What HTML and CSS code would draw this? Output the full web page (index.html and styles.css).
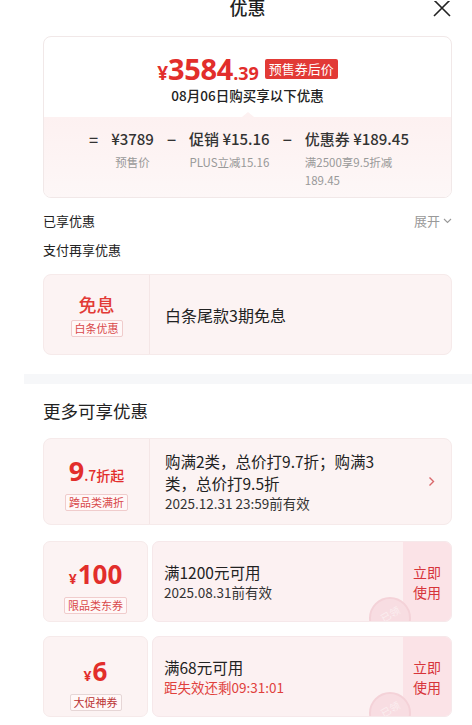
FILE: index.html
```html
<!DOCTYPE html>
<html lang="zh-CN">
<head>
    <meta charset="UTF-8">
    <meta name="viewport" content="width=device-width, initial-scale=1.0">
    <title>优惠</title>
    <link rel="stylesheet" href="styles.css">
</head>
<body>

<header class="top-bar">
    <span></span>
    <h1>优惠</h1>
    <span class="close">
        <svg width="20" height="17" viewBox="0 0 20 17"><path d="M2 -1 L18 15 M18 -1 L2 15" stroke="#222" stroke-width="1.6" fill="none"/></svg>
    </span>
</header>

<main class="sheet">

    <section class="summary">
        <div class="summary-head">
            <div class="final-price">
                <span class="yen">¥</span><span class="int">3584</span><span class="dec">.39</span>
                <span class="price-badge">预售券后价</span>
            </div>
            <p class="buy-date">08月06日购买享以下优惠</p>
        </div>
        <div class="summary-calc">
            <span class="op">=</span>
            <div class="calc-item center">
                <div class="calc-value">¥3789</div>
                <div class="calc-label">预售价</div>
            </div>
            <span class="op">−</span>
            <div class="calc-item center">
                <div class="calc-value">促销 ¥15.16</div>
                <div class="calc-label">PLUS立减15.16</div>
            </div>
            <span class="op">−</span>
            <div class="calc-item">
                <div class="calc-value">优惠券 ¥189.45</div>
                <div class="calc-label">满2500享9.5折减189.45</div>
            </div>
        </div>
    </section>

    <div class="row-title">
        <span>已享优惠</span>
        <span class="expand">展开
            <svg width="9" height="6" viewBox="0 0 9 6"><path d="M1 1 L4.5 4.5 L8 1" stroke="#999" stroke-width="1.1" fill="none"/></svg>
        </span>
    </div>
    <div class="row-title second">支付再享优惠</div>

    <div class="offer">
        <div class="offer-left">
            <div class="big-word">免息</div>
            <span class="tag">白条优惠</span>
        </div>
        <div class="offer-body">
            <div class="offer-line single">白条尾款3期免息</div>
        </div>
    </div>

    <div class="band"></div>

    <h2 class="more-title">更多可享优惠</h2>

    <div class="offer tall">
        <div class="offer-left">
            <div class="discount"><span class="d-big">9</span><span class="d-small">.7折起</span></div>
            <span class="tag">跨品类满折</span>
        </div>
        <div class="offer-body">
            <div class="offer-line">购满2类，总价打9.7折；购满3类，总价打9.5折</div>
            <div class="offer-sub">2025.12.31 23:59前有效</div>
        </div>
        <div class="offer-arrow">
            <svg width="7" height="11" viewBox="0 0 7 11"><path d="M1.5 1.5 L5.5 5.5 L1.5 9.5" stroke="#d9676a" stroke-width="1.4" fill="none"/></svg>
        </div>
    </div>

    <div class="ticket">
        <div class="ticket-left">
            <div class="amount"><span class="a-yen">¥</span>100</div>
            <span class="tag">限品类东券</span>
        </div>
        <div class="ticket-right">
            <div class="offer-body">
                <div class="offer-line">满1200元可用</div>
                <div class="offer-sub">2025.08.31前有效</div>
            </div>
            <div class="stamp"><span>已领</span></div>
            <div class="use-btn">立即<br>使用</div>
        </div>
    </div>

    <div class="ticket">
        <div class="ticket-left">
            <div class="amount"><span class="a-yen">¥</span>6</div>
            <span class="tag gray">大促神券</span>
        </div>
        <div class="ticket-right">
            <div class="offer-body">
                <div class="offer-line">满68元可用</div>
                <div class="offer-sub red">距失效还剩09:31:01</div>
            </div>
            <div class="stamp"><span>已领</span></div>
            <div class="use-btn">立即<br>使用</div>
        </div>
    </div>

</main>

</body>
</html>
```

FILE: styles.css
```css
body {
    margin: 0;
    background-color: #fff;
    font-family: "Noto Sans CJK SC", "Noto Sans", sans-serif;
    color: #1f1f1f;
}

.top-bar {
    display: grid;
    grid-template-columns: 1fr auto 1fr;
    height: 36px;
    padding: 0 20px 0 43px;
}

.top-bar h1 {
    margin: -6px 0 0;
    font-size: 18px;
    font-weight: 500;
    line-height: 26px;
}

.close {
    justify-self: end;
    margin-top: -1px;
}

.sheet {
    padding: 0 20px 0 43px;
}

/* 顶部价格卡片 */
.summary {
    border: 1px solid #f1e8e8;
    border-radius: 8px;
    overflow: hidden;
}

.summary-head {
    padding: 16px 0 12px;
    text-align: center;
}

.final-price {
    display: flex;
    justify-content: center;
    align-items: baseline;
    height: 32px;
    line-height: 32px;
    color: #e22e2b;
    font-family: "Open Sans", sans-serif;
    font-weight: 700;
}

.final-price .yen {
    font-size: 19px;
}

.final-price .int {
    font-size: 29px;
    letter-spacing: -0.3px;
}

.final-price .dec {
    font-size: 18px;
}

.price-badge {
    align-self: center;
    margin-left: 6px;
    padding: 0 4px;
    height: 20px;
    line-height: 20px;
    background-color: #e23a36;
    color: #fff;
    font-family: "Noto Sans CJK SC", sans-serif;
    font-weight: 400;
    font-size: 13px;
    border-radius: 2px;
}

.buy-date {
    margin: 0;
    font-size: 13.5px;
    font-weight: 500;
    line-height: 20px;
    color: #222;
}

.summary-calc {
    position: relative;
    display: flex;
    justify-content: center;
    align-items: flex-start;
    gap: 13px;
    padding: 11px 0 8px 3px;
    background: linear-gradient(#fdf1f1, #fdf7f7);
}

.summary-calc::before {
    content: "";
    position: absolute;
    top: -5px;
    left: 50%;
    margin-left: -6px;
    border-left: 6px solid transparent;
    border-right: 6px solid transparent;
    border-bottom: 5px solid #fdf1f1;
}

.op {
    font-size: 16px;
    line-height: 22px;
    color: #333;
    font-weight: 500;
}

.calc-item {
    display: flex;
    flex-direction: column;
}

.calc-item.center {
    align-items: center;
}

.calc-value {
    font-size: 15px;
    line-height: 22px;
    font-weight: 500;
    color: #333;
    white-space: nowrap;
}

.calc-label {
    margin-top: 3px;
    width: 100px;
    font-size: 11.5px;
    line-height: 18px;
    color: #999;
}

.calc-item.center .calc-label {
    width: auto;
    white-space: nowrap;
}

.row-title {
    display: flex;
    justify-content: space-between;
    margin-top: 13px;
    font-size: 13px;
    line-height: 20px;
    color: #222;
}

.row-title.second {
    margin-top: 9px;
}

.expand {
    color: #999;
    display: flex;
    align-items: center;
    gap: 3px;
}

/* 优惠卡片 */
.offer {
    display: flex;
    height: 81px;
    margin-top: 14px;
    background-color: #fcf3f3;
    border: 1px solid #f6eaea;
    border-radius: 8px;
    box-sizing: border-box;
}

.offer.tall {
    height: 87px;
}

.offer-left, .ticket-left {
    width: 106px;
    display: flex;
    flex-direction: column;
    align-items: center;
    justify-content: center;
    border-right: 1px solid #f4e6e6;
    box-sizing: border-box;
}

.big-word {
    font-size: 18px;
    line-height: 24px;
    color: #e23a36;
    font-weight: 500;
}

.tag {
    margin-top: 4px;
    padding: 0 3px;
    font-size: 11px;
    line-height: 15px;
    color: #d9484a;
    border: 1px solid #f0cccc;
    border-radius: 2px;
    background-color: #fff8f8;
}

.tag.gray {
    color: #b33;
    border-color: #e6d6d6;
}

.offer-body {
    flex: 1;
    display: flex;
    flex-direction: column;
    justify-content: center;
    padding-left: 15px;
}

.offer-line {
    font-size: 15.5px;
    line-height: 22px;
    color: #222;
    padding-right: 30px;
}

.offer-line.single {
    font-size: 16px;
}

.offer-sub {
    font-size: 13.5px;
    line-height: 19px;
    color: #333;
}

.offer-sub.red {
    color: #e0403c;
}

.offer-arrow {
    display: flex;
    align-items: center;
    padding-right: 16px;
}

.discount {
    color: #e22e2b;
    font-weight: 700;
    line-height: 30px;
    margin-top: 4px;
}

.d-big {
    font-family: "Open Sans", sans-serif;
    font-size: 27px;
}

.d-small {
    font-size: 14px;
    font-weight: 500;
}

/* 券 */
.ticket {
    display: flex;
    gap: 4px;
    height: 81px;
    margin-top: 16px;
}

.ticket + .ticket {
    margin-top: 14px;
}

.ticket-left {
    width: 105px;
    padding-top: 10px;
    background-color: #fcf3f3;
    border: 1px solid #f6eaea;
    border-radius: 7px;
}

.ticket + .ticket .ticket-left {
    padding-top: 14px;
}

.amount {
    font-family: "Open Sans", sans-serif;
    font-weight: 700;
    font-size: 26px;
    line-height: 28px;
    color: #e22e2b;
}

.a-yen {
    font-size: 14px;
    margin-right: 1px;
}

.ticket-right {
    flex: 1;
    display: flex;
    position: relative;
    overflow: hidden;
    background-color: #fcf1f2;
    border: 1px solid #f6e8ea;
    border-radius: 7px;
}

.ticket-right .offer-body {
    padding-left: 11px;
}

.ticket-right .offer-line {
    line-height: 21px;
}

.use-btn {
    width: 48px;
    display: flex;
    align-items: center;
    justify-content: center;
    font-size: 14px;
    line-height: 20px;
    color: #d7343a;
    background-color: #fbe3e7;
    text-align: center;
}

.stamp {
    position: absolute;
    right: 40px;
    bottom: -18px;
    width: 38px;
    height: 38px;
    border-radius: 50%;
    background-color: #f8dde2;
    border: 2px solid #f4d2d8;
    display: flex;
    align-items: center;
    justify-content: center;
}

.stamp span {
    transform: rotate(-30deg);
    font-size: 10px;
    color: #fbeef0;
    margin-top: -10px;
}

.band {
    height: 10px;
    margin: 19px -20px 0 -19px;
    background-color: #f6f7f9;
}

.more-title {
    margin: 14px 0 0;
    font-size: 17.5px;
    font-weight: 400;
    line-height: 26px;
    color: #222;
}
```
